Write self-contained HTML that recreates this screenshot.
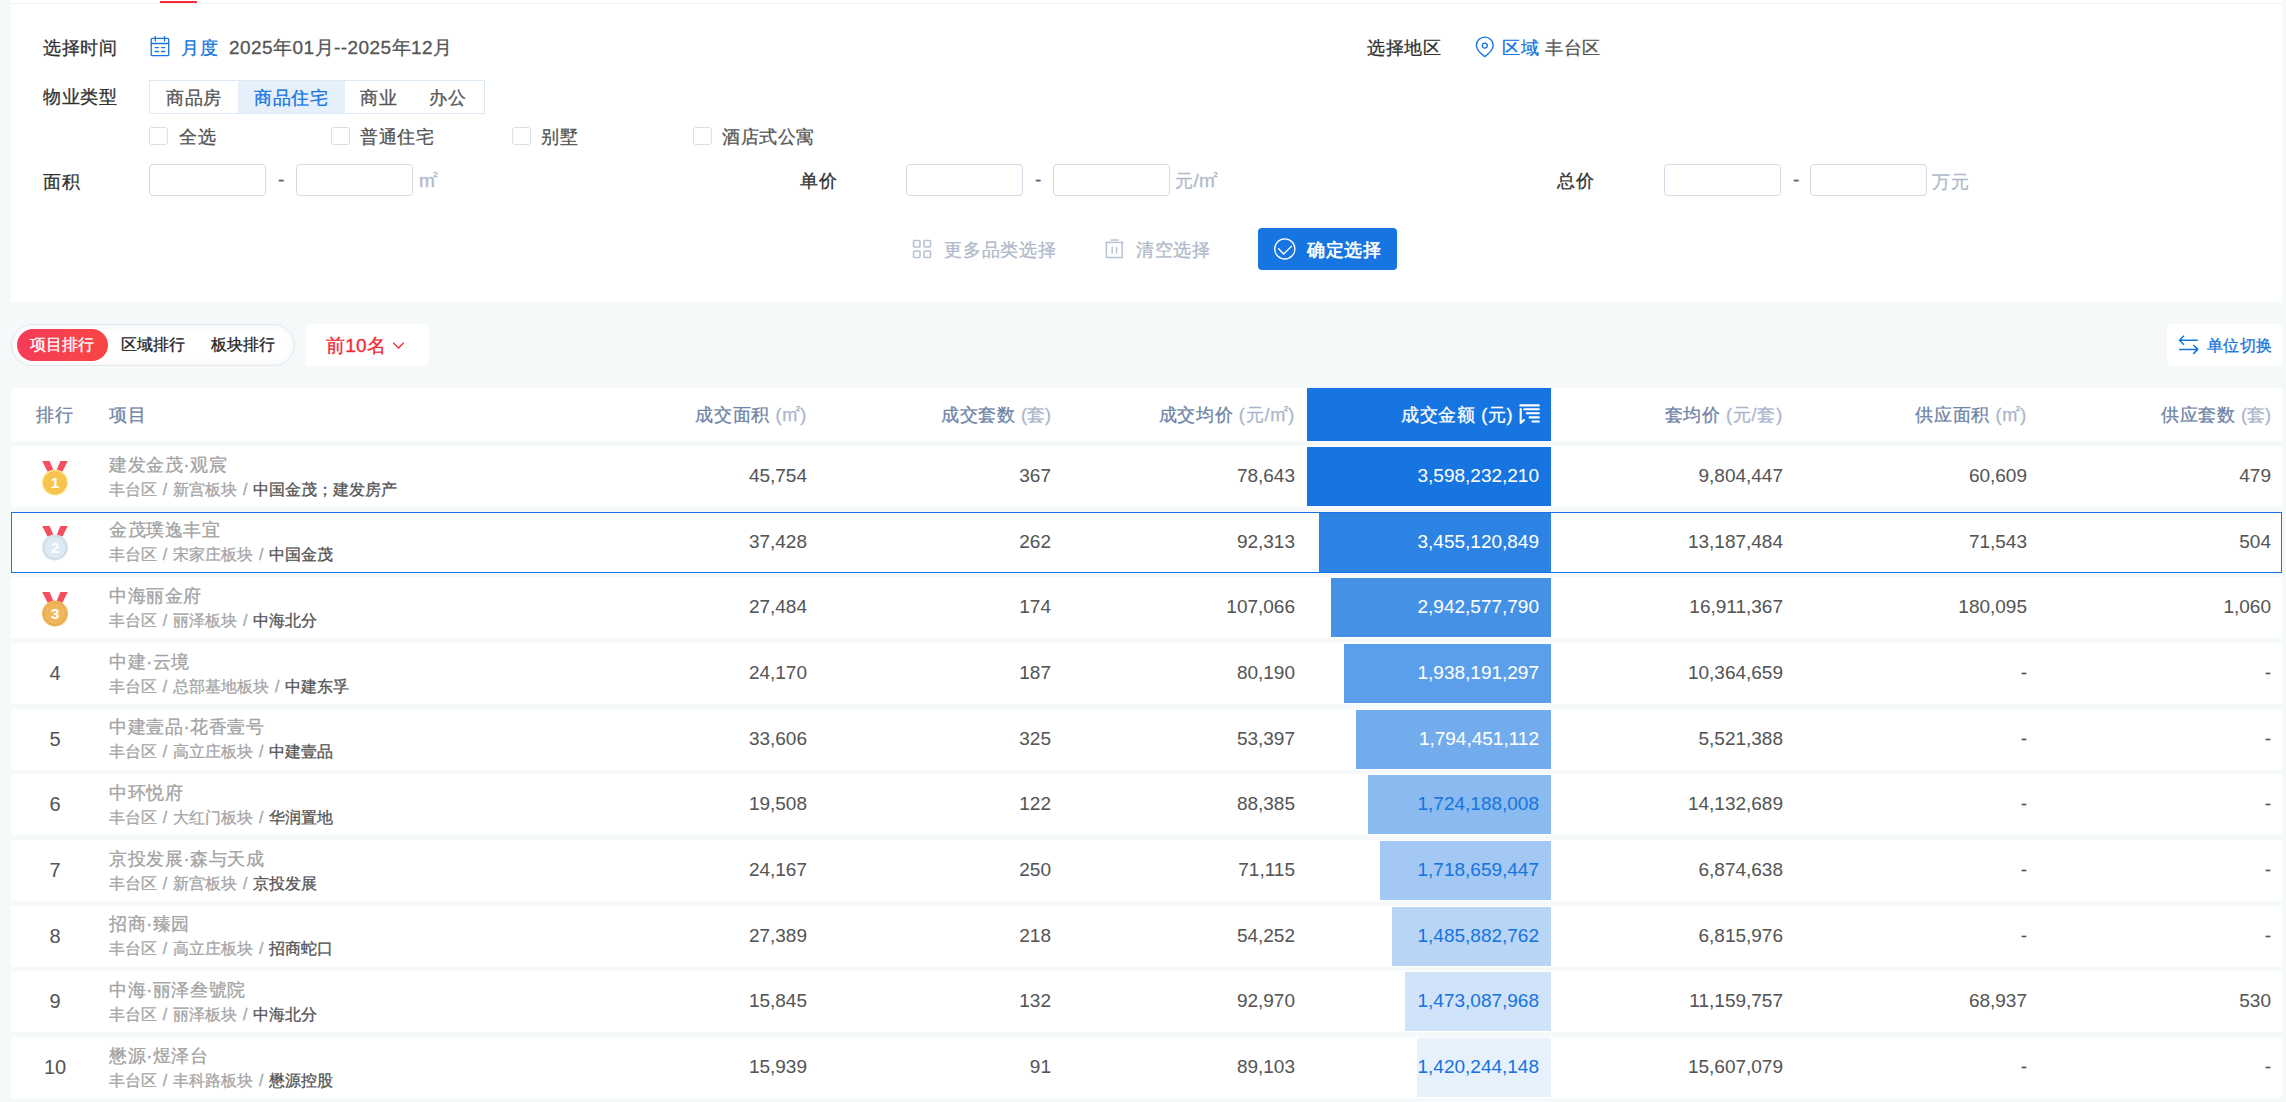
<!DOCTYPE html><html><head><meta charset="utf-8"><style>
*{margin:0;padding:0;box-sizing:border-box}
html,body{width:2286px;height:1102px;overflow:hidden;background:#f5f9fa;font-family:"Liberation Sans", sans-serif;}
.a,.hd{-webkit-text-stroke:0.3px currentColor}
.num{-webkit-text-stroke:0.05px currentColor}
.a{position:absolute;white-space:nowrap}
.t18{font-size:18px;line-height:24px;letter-spacing:0.6px}
.t16{font-size:16px;line-height:22px}
.m2{font-size:19px;letter-spacing:0}
.m2 i{font-style:normal;font-size:8px;position:relative;top:-10px;margin-left:-1.5px;-webkit-text-stroke:0.4px currentColor}
.inp{position:absolute;height:32px;width:117px;border:1px solid #d5dce7;border-radius:4px;background:#fff}
.cb{position:absolute;width:19px;height:18px;border:1px solid #d9dee6;border-radius:3px;background:#fff}
.row{position:absolute;left:11px;width:2271px;height:61px;background:#fff}
.num{position:absolute;font-size:19px;color:#555;line-height:24px;text-align:right;white-space:nowrap}
.hd{position:absolute;font-size:18px;letter-spacing:0.6px;color:#7084a6;line-height:24px;text-align:right;white-space:nowrap}
.hd span{color:#aab6cc;letter-spacing:0}
.nm{font-size:18px;letter-spacing:0.6px;color:#a3a3a3;line-height:24px}
.sub{font-size:16px;color:#a6a6a6;line-height:20px}
.sub b{font-weight:normal;color:#555}
.sep{padding:0 1.4px}
</style></head><body>
<div class="a" style="left:11px;top:0;width:2271px;height:302px;background:#fff"></div>
<div class="a" style="left:11px;top:3px;width:2271px;height:1px;background:#eceff3"></div>
<div class="a" style="left:160px;top:1px;width:37px;height:2px;background:#fd2b34"></div>
<div class="a t18" style="left:43px;top:36px;color:#333;">选择时间</div>
<svg class="a" style="left:150px;top:36px" width="20" height="21" viewBox="0 0 20 21"><g fill="none" stroke="#1675e0" stroke-width="1.3" stroke-linecap="round"><rect x="1.2" y="2.4" width="17.5" height="17.2" rx="1.2"/><line x1="5.3" y1="0.6" x2="5.3" y2="5"/><line x1="14.5" y1="0.6" x2="14.5" y2="5"/><line x1="1.2" y1="7.5" x2="18.7" y2="7.5"/><line x1="5.2" y1="11.6" x2="8.4" y2="11.6"/><line x1="11.6" y1="11.6" x2="14.7" y2="11.6"/><line x1="5.2" y1="15.5" x2="8.4" y2="15.5"/><line x1="11.6" y1="15.5" x2="14.7" y2="15.5"/></g></svg>
<div class="a t18" style="left:181px;top:36px;color:#1675e0;">月度</div>
<div class="a t18" style="left:229px;top:36px;color:#555;font-size:19px;letter-spacing:0.45px">2025年01月--2025年12月</div>
<div class="a t18" style="left:1367px;top:36px;color:#333;">选择地区</div>
<svg class="a" style="left:1475px;top:36px" width="20" height="22" viewBox="0 0 20 22"><path d="M9.8 20.6 C6.8 18.4 1.6 14.6 1.4 9.5 A8.4 8.4 0 0 1 18.2 9.5 C18 14.6 12.8 18.4 9.8 20.6 Z" fill="none" stroke="#1675e0" stroke-width="1.4" stroke-linejoin="round"/><circle cx="9.8" cy="9.6" r="2.5" fill="none" stroke="#1675e0" stroke-width="1.3"/></svg>
<div class="a t18" style="left:1502px;top:36px;color:#1675e0;">区域</div>
<div class="a t18" style="left:1545px;top:36px;color:#555;">丰台区</div>
<div class="a t18" style="left:43px;top:85px;color:#333;">物业类型</div>
<div class="a" style="left:149px;top:80px;width:336px;height:34px;border:1px solid #dde8f5;background:#fff"></div>
<div class="a" style="left:238px;top:81px;width:107px;height:32px;background:#e6f0fb"></div>
<div class="a t18" style="left:166px;top:86px;color:#555;">商品房</div>
<div class="a t18" style="left:254px;top:86px;color:#1675e0;">商品住宅</div>
<div class="a t18" style="left:360px;top:86px;color:#555;">商业</div>
<div class="a t18" style="left:429px;top:86px;color:#555;">办公</div>
<div class="cb" style="left:149px;top:127px"></div>
<div class="a t18" style="left:179px;top:125px;color:#555;">全选</div>
<div class="cb" style="left:331px;top:127px"></div>
<div class="a t18" style="left:360px;top:125px;color:#555;">普通住宅</div>
<div class="cb" style="left:512px;top:127px"></div>
<div class="a t18" style="left:541px;top:125px;color:#555;">别墅</div>
<div class="cb" style="left:693px;top:127px"></div>
<div class="a t18" style="left:722px;top:125px;color:#555;">酒店式公寓</div>
<div class="a t18" style="left:43px;top:170px;color:#333;">面积</div>
<div class="inp" style="left:149px;top:164px"></div>
<div class="a t18" style="left:278px;top:168px;color:#666;font-size:19px">-</div>
<div class="inp" style="left:296px;top:164px"></div>
<div class="a t18" style="left:419px;top:169px;color:#b0b9ca;"><span class="m2">m<i>2</i></span></div>
<div class="a t18" style="left:800px;top:169px;color:#333;">单价</div>
<div class="inp" style="left:906px;top:164px"></div>
<div class="a t18" style="left:1035px;top:168px;color:#666;font-size:19px">-</div>
<div class="inp" style="left:1053px;top:164px"></div>
<div class="a t18" style="left:1175px;top:169px;color:#b0b9ca;">元<span class="m2">/m<i>2</i></span></div>
<div class="a t18" style="left:1557px;top:169px;color:#333;">总价</div>
<div class="inp" style="left:1664px;top:164px"></div>
<div class="a t18" style="left:1793px;top:168px;color:#666;font-size:19px">-</div>
<div class="inp" style="left:1810px;top:164px"></div>
<div class="a t18" style="left:1932px;top:170px;color:#b0b9ca;">万元</div>
<svg class="a" style="left:912px;top:239px" width="21" height="21" viewBox="0 0 21 21"><g fill="none" stroke="#b8c1d2" stroke-width="1.6"><rect x="1.5" y="1.5" width="6.5" height="6.5" rx="1"/><rect x="12" y="1.5" width="6.5" height="6.5" rx="1"/><rect x="1.5" y="12" width="6.5" height="6.5" rx="1"/><rect x="12" y="12" width="6.5" height="6.5" rx="1"/></g></svg>
<div class="a t18" style="left:944px;top:238px;color:#b0b9ca;letter-spacing:0.75px">更多品类选择</div>
<svg class="a" style="left:1105px;top:239px" width="19" height="21" viewBox="0 0 19 21"><g fill="none" stroke="#b8c1d2" stroke-width="1.5"><line x1="0.3" y1="3.4" x2="18.5" y2="3.4"/><line x1="5.6" y1="1" x2="13.6" y2="1"/><path d="M1.4 3.4 V18.4 H17.1 V3.4"/><line x1="7.2" y1="7.8" x2="7.2" y2="14.7"/><line x1="11.6" y1="7.8" x2="11.6" y2="14.7"/></g></svg>
<div class="a t18" style="left:1136px;top:238px;color:#b0b9ca;">清空选择</div>
<div class="a" style="left:1258px;top:228px;width:139px;height:42px;background:#1675e0;border-radius:4px"></div>
<svg class="a" style="left:1273px;top:238px" width="23" height="23" viewBox="0 0 23 23"><circle cx="11.8" cy="10.9" r="10.1" fill="none" stroke="#fff" stroke-width="1.3"/><path d="M5.2 10.2 L10.6 16 L18.8 8" fill="none" stroke="#fff" stroke-width="1.3"/></svg>
<div class="a t18" style="left:1307px;top:238px;color:#fff;-webkit-text-stroke:0.6px #fff">确定选择</div>
<div class="a" style="left:11px;top:324px;width:284px;height:42px;border:1px solid #e4e8ee;border-radius:21px;background:#fff;box-shadow:inset 0 0 7px rgba(30,50,80,0.07)"></div>
<div class="a" style="left:17px;top:329px;width:91px;height:32px;border-radius:16px;background:linear-gradient(90deg,#f53b58,#f84644)"></div>
<div class="a t16" style="left:30px;top:334px;color:#fff;">项目排行</div>
<div class="a t16" style="left:121px;top:334px;color:#222;">区域排行</div>
<div class="a t16" style="left:211px;top:334px;color:#222;">板块排行</div>
<div class="a" style="left:306px;top:324px;width:123px;height:42px;border-radius:4px;background:#fff"></div>
<div class="a t18" style="left:326px;top:334px;color:#f42a33;font-size:19px;letter-spacing:0.2px">前10名</div>
<svg class="a" style="left:392px;top:341px" width="13" height="9" viewBox="0 0 13 9"><path d="M1.3 1.8 L6.5 7 L11.7 1.8" fill="none" stroke="#f42a33" stroke-width="1.3"/></svg>
<div class="a" style="left:2167px;top:324px;width:115px;height:42px;border-radius:4px;background:#fff"></div>
<svg class="a" style="left:2178px;top:334px" width="22" height="22" viewBox="0 0 22 22"><g fill="none" stroke="#1675e0" stroke-width="1.5" stroke-linejoin="round"><path d="M19.9 6.3 H1.6 M6 1.7 L1.5 6.3 L6 10.8"/><path d="M1.1 15.4 H19.4 M15.3 11 L19.8 15.4 L15.3 19.9"/></g></svg>
<div class="a t16" style="left:2207px;top:335px;color:#1675e0;letter-spacing:0.3px">单位切换</div>
<div class="a" style="left:11px;top:388px;width:2271px;height:53px;background:#fff"></div>
<div class="a" style="left:1307px;top:388px;width:244px;height:53px;background:#1675e0"></div>
<div class="a t18" style="left:36px;top:403px;color:#7084a6;">排行</div>
<div class="a t18" style="left:109px;top:403px;color:#7084a6;">项目</div>
<div class="hd" style="right:1479px;top:403px">成交面积 <span style="letter-spacing:0.8px">(<span class="m2" style="font-size:18px">m<i>2</i></span>)</span></div>
<div class="hd" style="right:1235px;top:403px">成交套数 <span style="letter-spacing:0">(套)</span></div>
<div class="hd" style="right:991px;top:403px">成交均价 <span style="letter-spacing:0.8px">(元/<span class="m2" style="font-size:18px">m<i>2</i></span>)</span></div>
<div class="hd" style="right:503px;top:403px">套均价 <span style="letter-spacing:0.8px">(元/套)</span></div>
<div class="hd" style="right:259px;top:403px">供应面积 <span style="letter-spacing:0.8px">(<span class="m2" style="font-size:18px">m<i>2</i></span>)</span></div>
<div class="hd" style="right:15px;top:403px">供应套数 <span style="letter-spacing:0">(套)</span></div>
<div class="hd" style="right:773px;top:403px;color:#fff">成交金额 (元)</div>
<svg class="a" style="left:1514px;top:400px" width="30" height="28" viewBox="0 0 30 28"><g fill="none" stroke="#fff" stroke-width="2.1" stroke-linecap="round" stroke-linejoin="round"><path d="M6.3 5.4 H24.8"/><path d="M10.3 9.3 H24.8"/><path d="M12.8 13.3 H24.8"/><path d="M15.6 17.4 H24.8"/><path d="M18.4 21.5 H24.8"/><path d="M6.7 9 V23 L10 20"/></g></svg>
<div class="row" style="top:446.00px"></div>
<div class="a" style="left:1307.00px;top:447.00px;width:244.00px;height:59px;background:rgba(22,117,224,1.00)"></div>
<svg class="a" style="left:41px;top:461px" width="28" height="36" viewBox="0 0 28 36"><path d="M1.2 0 H8.6 L13 10.5 H6.5Z M26.8 0 H19.4 L15 10.5 H21.5Z" fill="#f74d60"/><circle cx="14" cy="21.6" r="13" fill="#fae07c"/><circle cx="14" cy="21.6" r="10.9" fill="#f8c44f" stroke="#e9aa3c" stroke-width="0.9" stroke-dasharray="2.2 1.3"/><text x="14" y="27.3" text-anchor="middle" font-family="Liberation Sans" font-weight="bold" font-size="15.5" fill="#fff">1</text></svg>
<div class="a nm" style="left:109px;top:452.60px">建发金茂·观宸</div>
<div class="a sub" style="left:109px;top:479.60px">丰台区<span class="sep"> / </span>新宫板块<span class="sep"> / </span><b>中国金茂；建发房产</b></div>
<div class="num" style="right:1479px;top:464.00px;color:#555">45,754</div>
<div class="num" style="right:1235px;top:464.00px;color:#555">367</div>
<div class="num" style="right:991px;top:464.00px;color:#555">78,643</div>
<div class="num" style="right:747px;top:464.00px;color:#fff">3,598,232,210</div>
<div class="num" style="right:503px;top:464.00px;color:#555">9,804,447</div>
<div class="num" style="right:259px;top:464.00px;color:#555">60,609</div>
<div class="num" style="right:15px;top:464.00px;color:#555">479</div>
<div class="row" style="top:511.67px"></div>
<div class="a" style="left:1319.20px;top:512.67px;width:231.80px;height:59px;background:rgba(22,117,224,0.90)"></div>
<svg class="a" style="left:41px;top:526px" width="28" height="36" viewBox="0 0 28 36"><path d="M1.2 0 H8.6 L13 10.5 H6.5Z M26.8 0 H19.4 L15 10.5 H21.5Z" fill="#f74d60"/><circle cx="14" cy="21.6" r="13" fill="#d5e3ed"/><circle cx="14" cy="21.6" r="10.9" fill="#dbeaf4" stroke="#c3d2dd" stroke-width="0.9" stroke-dasharray="2.2 1.3"/><text x="14" y="27.3" text-anchor="middle" font-family="Liberation Sans" font-weight="bold" font-size="15.5" fill="#fff">2</text></svg>
<div class="a nm" style="left:109px;top:518.27px">金茂璞逸丰宜</div>
<div class="a sub" style="left:109px;top:545.27px">丰台区<span class="sep"> / </span>宋家庄板块<span class="sep"> / </span><b>中国金茂</b></div>
<div class="num" style="right:1479px;top:529.67px;color:#555">37,428</div>
<div class="num" style="right:1235px;top:529.67px;color:#555">262</div>
<div class="num" style="right:991px;top:529.67px;color:#555">92,313</div>
<div class="num" style="right:747px;top:529.67px;color:#fff">3,455,120,849</div>
<div class="num" style="right:503px;top:529.67px;color:#555">13,187,484</div>
<div class="num" style="right:259px;top:529.67px;color:#555">71,543</div>
<div class="num" style="right:15px;top:529.67px;color:#555">504</div>
<div class="a" style="left:11px;top:512px;width:2271px;height:61px;border:1px solid #1a73e8"></div>
<div class="row" style="top:577.34px"></div>
<div class="a" style="left:1331.40px;top:578.34px;width:219.60px;height:59px;background:rgba(22,117,224,0.80)"></div>
<svg class="a" style="left:41px;top:592px" width="28" height="36" viewBox="0 0 28 36"><path d="M1.2 0 H8.6 L13 10.5 H6.5Z M26.8 0 H19.4 L15 10.5 H21.5Z" fill="#f74d60"/><circle cx="14" cy="21.6" r="13" fill="#efb65c"/><circle cx="14" cy="21.6" r="10.9" fill="#efb65c" stroke="#dd9f4a" stroke-width="0.9" stroke-dasharray="2.2 1.3"/><text x="14" y="27.3" text-anchor="middle" font-family="Liberation Sans" font-weight="bold" font-size="15.5" fill="#fff">3</text></svg>
<div class="a nm" style="left:109px;top:583.94px">中海丽金府</div>
<div class="a sub" style="left:109px;top:610.94px">丰台区<span class="sep"> / </span>丽泽板块<span class="sep"> / </span><b>中海北分</b></div>
<div class="num" style="right:1479px;top:595.34px;color:#555">27,484</div>
<div class="num" style="right:1235px;top:595.34px;color:#555">174</div>
<div class="num" style="right:991px;top:595.34px;color:#555">107,066</div>
<div class="num" style="right:747px;top:595.34px;color:#fff">2,942,577,790</div>
<div class="num" style="right:503px;top:595.34px;color:#555">16,911,367</div>
<div class="num" style="right:259px;top:595.34px;color:#555">180,095</div>
<div class="num" style="right:15px;top:595.34px;color:#555">1,060</div>
<div class="row" style="top:643.01px"></div>
<div class="a" style="left:1343.60px;top:644.01px;width:207.40px;height:59px;background:rgba(22,117,224,0.70)"></div>
<div class="a" style="left:0;width:110px;text-align:center;top:661.01px;font-size:20px;line-height:24px;color:#555;-webkit-text-stroke:0.05px #555">4</div>
<div class="a nm" style="left:109px;top:649.61px">中建·云境</div>
<div class="a sub" style="left:109px;top:676.61px">丰台区<span class="sep"> / </span>总部基地板块<span class="sep"> / </span><b>中建东孚</b></div>
<div class="num" style="right:1479px;top:661.01px;color:#555">24,170</div>
<div class="num" style="right:1235px;top:661.01px;color:#555">187</div>
<div class="num" style="right:991px;top:661.01px;color:#555">80,190</div>
<div class="num" style="right:747px;top:661.01px;color:#fff">1,938,191,297</div>
<div class="num" style="right:503px;top:661.01px;color:#555">10,364,659</div>
<div class="num" style="right:259px;top:661.01px;color:#555">-</div>
<div class="num" style="right:15px;top:661.01px;color:#555">-</div>
<div class="row" style="top:708.68px"></div>
<div class="a" style="left:1355.80px;top:709.68px;width:195.20px;height:59px;background:rgba(22,117,224,0.60)"></div>
<div class="a" style="left:0;width:110px;text-align:center;top:726.68px;font-size:20px;line-height:24px;color:#555;-webkit-text-stroke:0.05px #555">5</div>
<div class="a nm" style="left:109px;top:715.28px">中建壹品·花香壹号</div>
<div class="a sub" style="left:109px;top:742.28px">丰台区<span class="sep"> / </span>高立庄板块<span class="sep"> / </span><b>中建壹品</b></div>
<div class="num" style="right:1479px;top:726.68px;color:#555">33,606</div>
<div class="num" style="right:1235px;top:726.68px;color:#555">325</div>
<div class="num" style="right:991px;top:726.68px;color:#555">53,397</div>
<div class="num" style="right:747px;top:726.68px;color:#fff">1,794,451,112</div>
<div class="num" style="right:503px;top:726.68px;color:#555">5,521,388</div>
<div class="num" style="right:259px;top:726.68px;color:#555">-</div>
<div class="num" style="right:15px;top:726.68px;color:#555">-</div>
<div class="row" style="top:774.35px"></div>
<div class="a" style="left:1368.00px;top:775.35px;width:183.00px;height:59px;background:rgba(22,117,224,0.50)"></div>
<div class="a" style="left:0;width:110px;text-align:center;top:792.35px;font-size:20px;line-height:24px;color:#555;-webkit-text-stroke:0.05px #555">6</div>
<div class="a nm" style="left:109px;top:780.95px">中环悦府</div>
<div class="a sub" style="left:109px;top:807.95px">丰台区<span class="sep"> / </span>大红门板块<span class="sep"> / </span><b>华润置地</b></div>
<div class="num" style="right:1479px;top:792.35px;color:#555">19,508</div>
<div class="num" style="right:1235px;top:792.35px;color:#555">122</div>
<div class="num" style="right:991px;top:792.35px;color:#555">88,385</div>
<div class="num" style="right:747px;top:792.35px;color:#1675e0">1,724,188,008</div>
<div class="num" style="right:503px;top:792.35px;color:#555">14,132,689</div>
<div class="num" style="right:259px;top:792.35px;color:#555">-</div>
<div class="num" style="right:15px;top:792.35px;color:#555">-</div>
<div class="row" style="top:840.02px"></div>
<div class="a" style="left:1380.20px;top:841.02px;width:170.80px;height:59px;background:rgba(22,117,224,0.40)"></div>
<div class="a" style="left:0;width:110px;text-align:center;top:858.02px;font-size:20px;line-height:24px;color:#555;-webkit-text-stroke:0.05px #555">7</div>
<div class="a nm" style="left:109px;top:846.62px">京投发展·森与天成</div>
<div class="a sub" style="left:109px;top:873.62px">丰台区<span class="sep"> / </span>新宫板块<span class="sep"> / </span><b>京投发展</b></div>
<div class="num" style="right:1479px;top:858.02px;color:#555">24,167</div>
<div class="num" style="right:1235px;top:858.02px;color:#555">250</div>
<div class="num" style="right:991px;top:858.02px;color:#555">71,115</div>
<div class="num" style="right:747px;top:858.02px;color:#1675e0">1,718,659,447</div>
<div class="num" style="right:503px;top:858.02px;color:#555">6,874,638</div>
<div class="num" style="right:259px;top:858.02px;color:#555">-</div>
<div class="num" style="right:15px;top:858.02px;color:#555">-</div>
<div class="row" style="top:905.69px"></div>
<div class="a" style="left:1392.40px;top:906.69px;width:158.60px;height:59px;background:rgba(22,117,224,0.30)"></div>
<div class="a" style="left:0;width:110px;text-align:center;top:923.69px;font-size:20px;line-height:24px;color:#555;-webkit-text-stroke:0.05px #555">8</div>
<div class="a nm" style="left:109px;top:912.29px">招商·臻园</div>
<div class="a sub" style="left:109px;top:939.29px">丰台区<span class="sep"> / </span>高立庄板块<span class="sep"> / </span><b>招商蛇口</b></div>
<div class="num" style="right:1479px;top:923.69px;color:#555">27,389</div>
<div class="num" style="right:1235px;top:923.69px;color:#555">218</div>
<div class="num" style="right:991px;top:923.69px;color:#555">54,252</div>
<div class="num" style="right:747px;top:923.69px;color:#1675e0">1,485,882,762</div>
<div class="num" style="right:503px;top:923.69px;color:#555">6,815,976</div>
<div class="num" style="right:259px;top:923.69px;color:#555">-</div>
<div class="num" style="right:15px;top:923.69px;color:#555">-</div>
<div class="row" style="top:971.36px"></div>
<div class="a" style="left:1404.60px;top:972.36px;width:146.40px;height:59px;background:rgba(22,117,224,0.20)"></div>
<div class="a" style="left:0;width:110px;text-align:center;top:989.36px;font-size:20px;line-height:24px;color:#555;-webkit-text-stroke:0.05px #555">9</div>
<div class="a nm" style="left:109px;top:977.96px">中海·丽泽叁號院</div>
<div class="a sub" style="left:109px;top:1004.96px">丰台区<span class="sep"> / </span>丽泽板块<span class="sep"> / </span><b>中海北分</b></div>
<div class="num" style="right:1479px;top:989.36px;color:#555">15,845</div>
<div class="num" style="right:1235px;top:989.36px;color:#555">132</div>
<div class="num" style="right:991px;top:989.36px;color:#555">92,970</div>
<div class="num" style="right:747px;top:989.36px;color:#1675e0">1,473,087,968</div>
<div class="num" style="right:503px;top:989.36px;color:#555">11,159,757</div>
<div class="num" style="right:259px;top:989.36px;color:#555">68,937</div>
<div class="num" style="right:15px;top:989.36px;color:#555">530</div>
<div class="row" style="top:1037.03px"></div>
<div class="a" style="left:1416.80px;top:1038.03px;width:134.20px;height:59px;background:rgba(22,117,224,0.10)"></div>
<div class="a" style="left:0;width:110px;text-align:center;top:1055.03px;font-size:20px;line-height:24px;color:#555;-webkit-text-stroke:0.05px #555">10</div>
<div class="a nm" style="left:109px;top:1043.63px">懋源·煜泽台</div>
<div class="a sub" style="left:109px;top:1070.63px">丰台区<span class="sep"> / </span>丰科路板块<span class="sep"> / </span><b>懋源控股</b></div>
<div class="num" style="right:1479px;top:1055.03px;color:#555">15,939</div>
<div class="num" style="right:1235px;top:1055.03px;color:#555">91</div>
<div class="num" style="right:991px;top:1055.03px;color:#555">89,103</div>
<div class="num" style="right:747px;top:1055.03px;color:#1675e0">1,420,244,148</div>
<div class="num" style="right:503px;top:1055.03px;color:#555">15,607,079</div>
<div class="num" style="right:259px;top:1055.03px;color:#555">-</div>
<div class="num" style="right:15px;top:1055.03px;color:#555">-</div>
</body></html>
